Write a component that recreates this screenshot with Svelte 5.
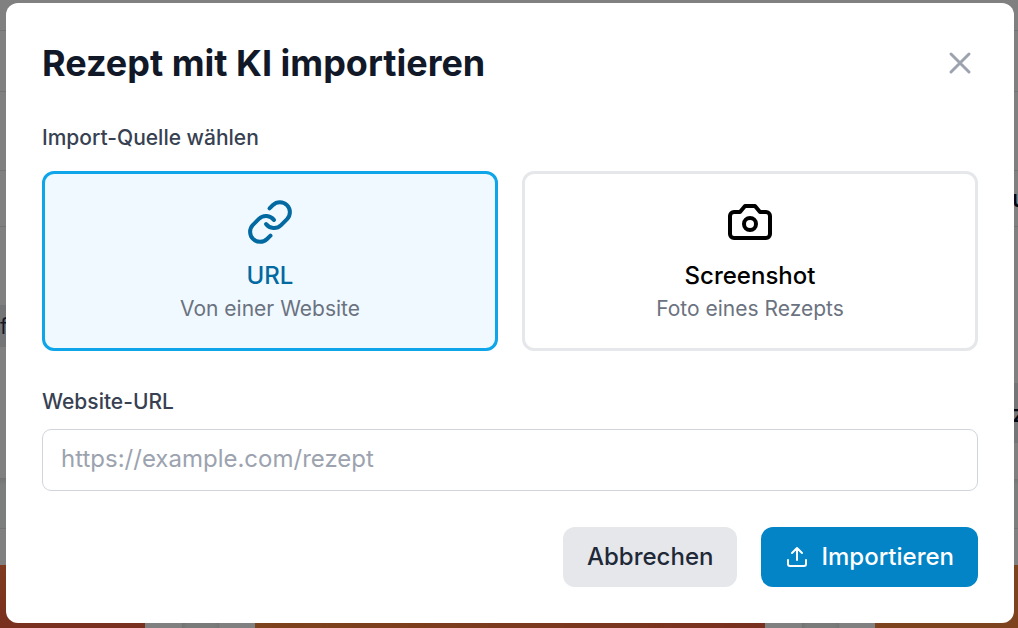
<script>
  let source = $state('url');
  let address = $state('');
  const blocks = [
    { w: 145, c: 'red' }, { w: 110, c: 'plain' }, { w: 510, c: 'mix' },
    { w: 110, c: 'plain' }, { w: 143, c: 'brown' }
  ];
  const left = [
    { h: 31 }, { h: 61 }, { h: 79 }, { h: 56 }, { h: 78, plain: true },
    { h: 42, text: 'f', tint: true }, { h: 132 }, { h: 50, shade: true }, { h: 36, plain: true }
  ];
  const right = [
    { h: 31 }, { h: 61 }, { h: 79 }, { h: 56, text: 'u' }, { h: 156, plain: true },
    { h: 60, text: 'z', tint: true }, { h: 36, plain: true }, { h: 50, shade: true }, { h: 36, plain: true }
  ];
</script>

<main>
  <div class="backdrop" aria-hidden="true">
    <div class="sides">
      {#each [left, right] as side}
        <div class="side">
          {#each side as row}
            <div class="row" class:plain={row.plain} class:tint={row.tint} class:shade={row.shade} style:height="{row.h}px">{row.text ?? ''}</div>
          {/each}
        </div>
      {/each}
    </div>
    <div class="blocks">
      {#each blocks as b}<div class={b.c} style:flex-grow={b.w}></div>{/each}
    </div>
  </div>

  <div class="dialog" role="dialog" aria-modal="true" aria-labelledby="title">
    <header>
      <h1 id="title">Rezept mit KI importieren</h1>
      <button class="close" aria-label="Schließen">
        <svg width="36" height="36" viewBox="0 0 24 24" stroke-width="2"><path d="M6 18 18 6M6 6l12 12" /></svg>
      </button>
    </header>

    <p class="label" id="source-label">Import-Quelle wählen</p>
    <div class="cards" role="group" aria-labelledby="source-label">
      <button class="card" class:active={source === 'url'} aria-pressed={source === 'url'} onclick={() => (source = 'url')}>
        <svg width="48" height="48" viewBox="0 0 24 24" stroke-width="2">
          <path d="M10 13a5 5 0 0 0 7.54.54l3-3a5 5 0 0 0-7.07-7.07l-1.72 1.71" />
          <path d="M14 11a5 5 0 0 0-7.54-.54l-3 3a5 5 0 0 0 7.07 7.07l1.71-1.71" />
        </svg>
        <span class="name">URL</span>
        <span class="hint">Von einer Website</span>
      </button>
      <button class="card" class:active={source === 'shot'} aria-pressed={source === 'shot'} onclick={() => (source = 'shot')}>
        <svg width="48" height="48" viewBox="0 0 24 24" stroke-width="2">
          <path d="M14.5 4h-5L7 7H4a2 2 0 0 0-2 2v9a2 2 0 0 0 2 2h16a2 2 0 0 0 2-2V9a2 2 0 0 0-2-2h-3l-2.500-3z" />
          <circle cx="12" cy="13" r="3" />
        </svg>
        <span class="name">Screenshot</span>
        <span class="hint">Foto eines Rezepts</span>
      </button>
    </div>

    <label class="label" for="address">Website-URL</label>
    <input id="address" type="url" placeholder="https://example.com/rezept" bind:value={address} />

    <footer>
      <button class="action">Abbrechen</button>
      <button class="action primary">
        <svg width="24" height="24" viewBox="0 0 24 24" stroke-width="2">
          <path d="M21 15v4a2 2 0 0 1-2 2H5a2 2 0 0 1-2-2v-4M17 8l-5-5-5 5M12 3v12" />
        </svg>
        Importieren
      </button>
    </footer>
  </div>
</main>

<style>
  :global(body) { margin: 0; background: #808080; }
  main {
    position: relative;
    box-sizing: border-box;
    min-height: 100vh;
    padding: 3px 4px 5px 6px;
    overflow: hidden;
    font-family: Inter, sans-serif;
  }
  .backdrop { position: absolute; inset: 0; display: flex; flex-direction: column; }
  .sides { display: flex; justify-content: space-between; }
  .side { width: 6px; overflow: hidden; }
  .row {
    box-sizing: border-box;
    border-bottom: 1px solid #727376;
    overflow: hidden;
    display: flex;
    align-items: center;
    font-size: 21px;
    color: #111827;
  }
  .side:last-child .row { font-size: 24px; font-weight: 500; color: #030712; }
  .row.plain, .row.tint { border-bottom: 0; }
  .row.tint { background: #737577; }
  .row.shade { background: linear-gradient(#737474, #7c7d7d 6px); }
  .blocks { flex: 1; display: flex; }
  .blocks div { flex-basis: 0; }
  .red { background: linear-gradient(#803a20, #79301f); }
  .mix { background: linear-gradient(90deg, #7d431c, #79301f); }
  .brown { background: #7d431f; }
  .plain { background: #808080; }
  .blocks .plain { background: linear-gradient(90deg, #808080 33%, #727373 34%, #797a7a 38%, #797a7a 63%, #747575 67%, #808080 68%); }

  .dialog {
    position: relative;
    padding: 36px;
    background: #fff;
    border-radius: 12px;
  }
  svg { display: block; fill: none; stroke: currentColor; stroke-linecap: round; stroke-linejoin: round; }
  button { font: inherit; cursor: pointer; }
  header { display: flex; align-items: center; justify-content: space-between; margin-bottom: 36px; }
  h1 { margin: 0; font-size: 36px; line-height: 48px; font-weight: 700; color: #111827; }
  .close { padding: 0; border: 0; background: none; color: #9ca3af; }
  .label { display: block; margin: 0 0 12px; font-size: 21px; line-height: 30px; font-weight: 500; color: #374151; }
  p.label { margin-bottom: 18px; }
  .cards { display: grid; grid-template-columns: 1fr 1fr; gap: 24px; margin-bottom: 36px; }
  .card {
    display: flex;
    flex-direction: column;
    align-items: center;
    padding: 24px;
    border: 3px solid #e5e7eb;
    border-radius: 12px;
    background: #fff;
    color: #000;
  }
  .card.active { border-color: #0ea5e9; background: #f0f9ff; color: #0369a1; }
  .card svg { margin-bottom: 12px; }
  .name { font-size: 24px; line-height: 36px; font-weight: 500; }
  .hint { font-size: 21px; line-height: 30px; color: #6b7280; }
  input {
    display: block;
    box-sizing: border-box;
    width: 100%;
    padding: 11px 18px 13px;
    border: 1px solid #d1d5db;
    border-radius: 9px;
    background: #fff;
    color: #111827;
    font-family: inherit;
    font-size: 24px;
    line-height: 36px;
  }
  input::placeholder { color: #9ca3af; opacity: 1; }
  footer { display: flex; justify-content: flex-end; gap: 24px; margin-top: 36px; }
  .action {
    display: flex;
    align-items: center;
    gap: 12px;
    padding: 12px 24px;
    border: 0;
    border-radius: 12px;
    background: #e5e7eb;
    color: #1f2937;
    font-size: 24px;
    line-height: 36px;
    font-weight: 500;
  }
  .primary { background: #0284c7; color: #fff; }
</style>
